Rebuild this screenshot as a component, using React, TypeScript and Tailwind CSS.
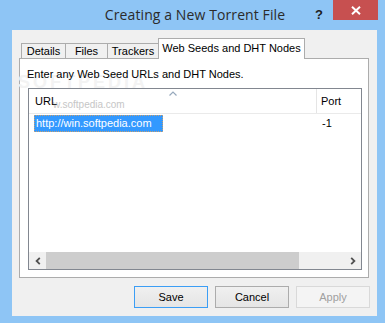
import React from "react";

function Chevron({ dir }: { dir: "left" | "right" }) {
  return (
    <svg width="6" height="8" viewBox="0 0 6 8" className="block">
      {dir === "left" ? (
        <path d="M4.8 0.8 L1.6 4 L4.8 7.2" fill="none" stroke="#505050" strokeWidth="1.8" />
      ) : (
        <path d="M1.2 0.8 L4.4 4 L1.2 7.2" fill="none" stroke="#505050" strokeWidth="1.8" />
      )}
    </svg>
  );
}

export default function App() {
  return (
    <div className="w-[385px] h-[323px] bg-[#8ec5f5] flex flex-col overflow-hidden relative font-['Liberation_Sans',Arial,sans-serif] text-[11px] text-black">
      {/* Title bar */}
      <div className="h-[30px] shrink-0 pl-[12px] pr-[7px] flex items-center justify-center pb-[2px]">
        <span className="font-['Open_Sans',sans-serif] text-[14px] text-[#2b2b2b] tracking-[0.1px]">
          Creating a New Torrent File
        </span>
      </div>
      <div className="absolute left-[315px] top-[5px] font-['Liberation_Sans',Arial,sans-serif] font-bold text-[13px] text-[#1e1e1e]">?</div>
      <div className="absolute right-[7px] top-0 w-[45px] h-[20px] bg-[#c75050] flex items-center justify-center">
        <svg width="10" height="9" viewBox="0 0 10 9">
          <path d="M1 0.8 L9 8.2 M9 0.8 L1 8.2" stroke="#ffffff" strokeWidth="2" />
        </svg>
      </div>

      {/* Client area */}
      <div className="ml-[12px] mr-[8px] mb-[7px] flex-1 bg-[#f0f0f0] flex flex-col pt-[8px]">
        <div className="pl-[7px] pr-[8px]">
          {/* Tab strip */}
          <div className="flex items-end h-[20px] pl-[2px]">
            <div className="w-[45px] h-[15px] border border-b-0 border-[#acacac] bg-[#f0f0f0] flex items-center justify-center">
              Details
            </div>
            <div className="-ml-px w-[43px] h-[15px] border border-b-0 border-[#acacac] bg-[#f0f0f0] flex items-center justify-center">
              Files
            </div>
            <div className="-ml-px w-[52px] h-[15px] border border-b-0 border-[#acacac] bg-[#f0f0f0] flex items-center justify-center">
              Trackers
            </div>
            <div className="-ml-px w-[147px] h-[21px] -mb-px relative z-10 border border-b-0 border-[#acacac] bg-white flex items-center justify-center pb-[1px]">
              Web Seeds and DHT Nodes
            </div>
          </div>

          {/* Panel */}
          <div className="h-[220px] border border-[#acacac] bg-white flex flex-col relative">
            <div className="absolute left-[-2px] top-[10px] text-[18px] font-bold tracking-[3px] text-[#f3f3f3] select-none">
              SOFTPEDIA
            </div>
            <div className="relative pl-[7px] pt-[9px] h-[21px] leading-[12px]">
              Enter any Web Seed URLs and DHT Nodes.
            </div>
            <div className="ml-[8px] mt-[8px] w-[334px] h-[182px] border border-[#828790] bg-white flex flex-col relative">
              {/* Header */}
              <div className="h-[25px] border-b border-[#eaeaea] grid grid-cols-[288px_1fr] relative">
                <div className="border-r border-[#e5e5e5] pl-[6px] flex items-center pt-[1px] relative">
                  <span className="absolute left-[24px] top-[8px] text-[10px] text-[#c6c6c6]">w.softpedia.com</span>
                  <span className="relative">URL</span>
                  <svg className="absolute left-[140px] top-[2px]" width="8" height="5" viewBox="0 0 8 5">
                    <path d="M0.5 4.5 L4 1 L7.5 4.5" fill="none" stroke="#97a9bd" strokeWidth="1.2" />
                  </svg>
                </div>
                <div className="pl-[4px] flex items-center pt-[1px]">Port</div>
              </div>
              {/* Row */}
              <div className="h-[18px] grid grid-cols-[288px_1fr] items-center">
                <div className="pl-[5px] flex">
                  <div className="w-[129px] h-[17px] bg-[#3399ff] text-white border border-dotted border-[#c8a070] flex items-center pl-[1px]">
                    http://win.softpedia.com
                  </div>
                </div>
                <div className="pl-[5px]">-1</div>
              </div>
              {/* Horizontal scrollbar */}
              <div className="mt-auto h-[17px] bg-[#f0f0f0] flex items-stretch">
                <div className="w-[17px] flex items-center justify-center">
                  <Chevron dir="left" />
                </div>
                <div className="flex-1 flex items-stretch">
                  <div className="w-[253px] bg-[#cdcdcd]" />
                </div>
                <div className="w-[17px] flex items-center justify-center">
                  <Chevron dir="right" />
                </div>
              </div>
            </div>
          </div>
        </div>

        {/* Buttons */}
        <div className="flex justify-end gap-[7px] pt-[8px] pr-[7px]">
          <button className="w-[74px] h-[22px] border border-[#3c9ef5] bg-gradient-to-b from-[#f0f0f0] to-[#e5e5e5] flex items-center justify-center">
            Save
          </button>
          <button className="w-[74px] h-[22px] border border-[#acacac] bg-gradient-to-b from-[#f0f0f0] to-[#e5e5e5] flex items-center justify-center">
            Cancel
          </button>
          <button className="w-[74px] h-[22px] border border-[#d9d9d9] bg-[#f4f4f4] text-[#a0a0a0] flex items-center justify-center">
            Apply
          </button>
        </div>
      </div>
    </div>
  );
}
